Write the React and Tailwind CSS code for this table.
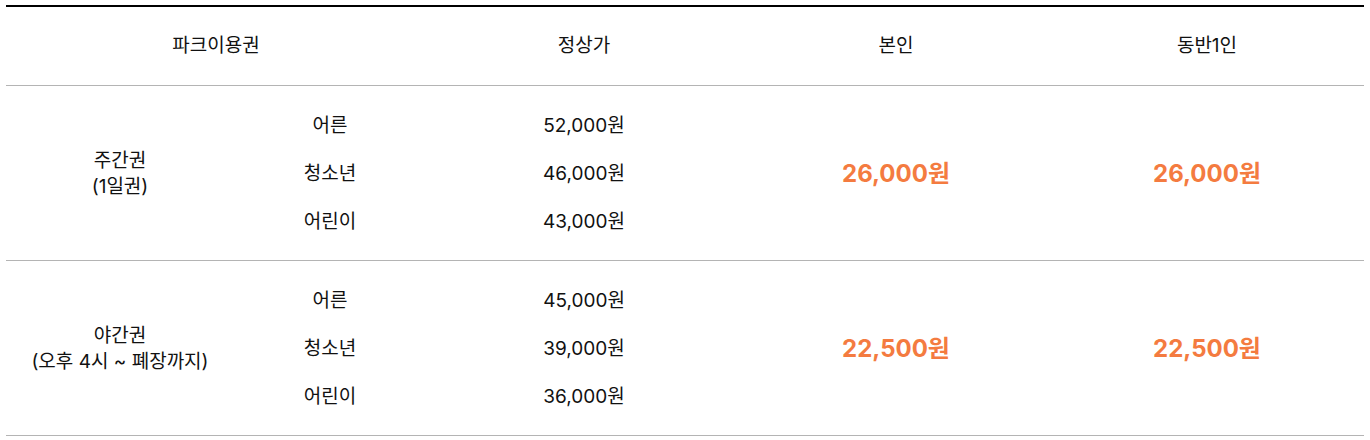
import React from 'react';

// Park ticket price table
const tickets = [
  {
    id: 'day',
    title: ['주간권', '(1일권)'],
    prices: [
      { type: '어른', price: '52,000원' },
      { type: '청소년', price: '46,000원' },
      { type: '어린이', price: '43,000원' },
    ],
    self: '26,000원',
    companion: '26,000원',
  },
  {
    id: 'night',
    title: ['야간권', '(오후 4시 ~ 폐장까지)'],
    prices: [
      { type: '어른', price: '45,000원' },
      { type: '청소년', price: '39,000원' },
      { type: '어린이', price: '36,000원' },
    ],
    self: '22,500원',
    companion: '22,500원',
  },
];

const App = () => {
  return (
    <div
      className="bg-white px-[6px] pt-[5px] text-[#111]"
      style={{ fontFamily: 'Inter, "Noto Sans CJK KR", sans-serif' }}
    >
      <table className="w-full table-fixed border-collapse border-t-2 border-black text-[19px]">
        <colgroup>
          <col className="w-[228px]" />
          <col className="w-[192px]" />
          <col className="w-[316px]" />
          <col className="w-[308px]" />
          <col />
        </colgroup>
        <thead>
          <tr className="h-[79px] border-b border-[#b4b4b4]">
            <th colSpan={2} className="text-center font-normal">파크이용권</th>
            <th className="text-center font-normal">정상가</th>
            <th className="text-center font-normal">본인</th>
            <th className="text-center font-normal">동반1인</th>
          </tr>
        </thead>
        <tbody>
          {tickets.map((t) => (
            <tr key={t.id} className="border-b border-[#b4b4b4]">
              <td className="pt-[2px] text-center leading-[26px]">
                {t.title.map((line) => (
                  <div key={line}>{line}</div>
                ))}
              </td>
              <td className="pt-[17px] pb-[13px] text-center">
                {t.prices.map((p) => (
                  <div key={p.type} className="flex h-12 items-center justify-center">{p.type}</div>
                ))}
              </td>
              <td className="pt-[17px] pb-[13px] text-center">
                {t.prices.map((p) => (
                  <div key={p.type} className="flex h-12 items-center justify-center">{p.price}</div>
                ))}
              </td>
              <td className="pt-[2px] text-center text-[24px] font-bold text-[#f47b40]">{t.self}</td>
              <td className="pt-[2px] text-center text-[24px] font-bold text-[#f47b40]">{t.companion}</td>
            </tr>
          ))}
        </tbody>
      </table>
    </div>
  );
};

export default App;
